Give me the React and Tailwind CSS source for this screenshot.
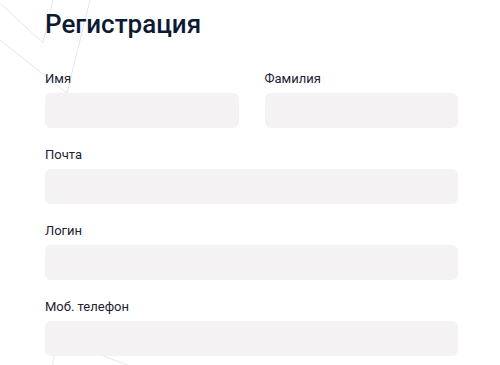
import React from 'react';

function Field({ label, className = '' }) {
    return (
        <div className={`flex flex-col ${className}`}>
            <label className="text-[13px] leading-4 text-[#1b2233] mb-[6px]">{label}</label>
            <input
                type="text"
                className="h-[35px] w-full rounded-md bg-[#f4f2f3] outline-none px-3"
            />
        </div>
    );
}

export default function App() {
    return (
        <div
            className="relative w-[500px] h-[365px] overflow-hidden bg-white"
            style={{ fontFamily: 'Roboto, "Noto Sans", sans-serif' }}
        >
            {/* faint background lines */}
            <svg className="absolute inset-0 pointer-events-none" width="500" height="365" viewBox="0 0 500 365">
                <g stroke="#dde7f2" strokeWidth="1" fill="none">
                    <polyline points="0,3 43,43 53,0" />
                    <polyline points="0,40 67,93 90,0" />
                    <line x1="52" y1="365" x2="58" y2="343" />
                    <line x1="68" y1="343" x2="128" y2="365" />
                </g>
            </svg>

            <div className="relative pl-[45px] w-[458px] pt-[6px]">
                <h1 className="text-[26px] leading-[36px] font-medium text-[#0d1a33]">Регистрация</h1>

                <div className="mt-[29px] flex gap-[26px]">
                    <Field label="Имя" className="flex-1" />
                    <Field label="Фамилия" className="flex-1" />
                </div>
                <Field label="Почта" className="mt-[19px]" />
                <Field label="Логин" className="mt-[19px]" />
                <Field label="Моб. телефон" className="mt-[19px]" />
            </div>
        </div>
    );
}
